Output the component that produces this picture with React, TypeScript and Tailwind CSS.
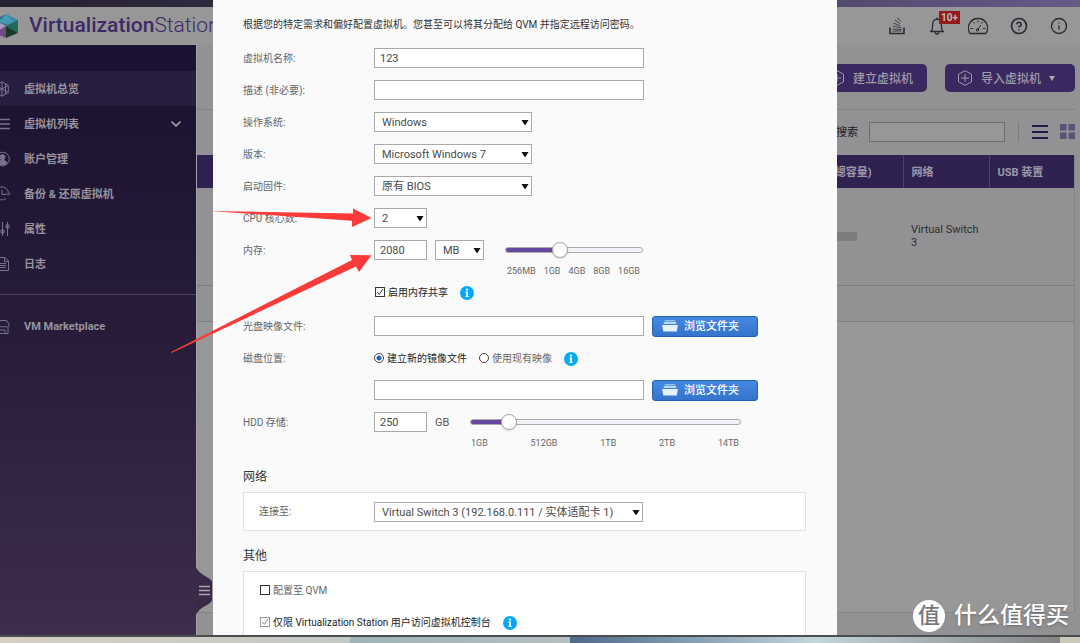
import type { ReactNode } from "react";
import { ChevronDown, CircleHelp, Info } from "lucide-react";

const field = "h-5 border border-[#a9a9a9] bg-white px-[5px] text-[11px] text-[#4a4a4a] outline-none";

function Caret() {
  return (
    <svg viewBox="0 0 8 5" className="pointer-events-none absolute top-2 right-[3px] h-[5px] w-2" aria-hidden="true">
      <path d="M.5 0h7L4.600 4.800H3.400z" fill="#111" />
    </svg>
  );
}

function Select({ id, label, value, className }: { id: string; label?: string; value: string; className: string }) {
  return (
    <span className={`relative flex ${className}`}>
      <select id={id} aria-label={label} className="h-5 w-full appearance-none border border-[#a9a9a9] bg-white pt-[2px] pl-[7px] text-[11px] text-[#4a4a4a] outline-none">
        <option>{value}</option>
      </select>
      <Caret />
    </span>
  );
}

function Row({ label, htmlFor, children }: { label: string; htmlFor?: string; children: ReactNode }) {
  return (
    <div className="flex h-5 items-center">
      <label htmlFor={htmlFor} className="w-[131px] shrink-0 text-[10px] text-[#666]">
        {label}
      </label>
      {children}
    </div>
  );
}

function InfoDot() {
  return (
    <svg viewBox="0 0 14 14" className="mt-[2px] h-[14px] w-[14px]" aria-hidden="true">
      <circle cx="7" cy="7" r="7" fill="#06a9fa" />
      <rect x="6.1" y="2.6" width="1.9" height="1.9" fill="#fff" />
      <path d="M5.4 5.6H8V10h.8v1.1H5.3V10h.8V6.7h-.7z" fill="#fff" />
    </svg>
  );
}

function Check({ id, disabled }: { id: string; disabled?: boolean }) {
  return (
    <span className="relative flex h-[10px] w-[10px]">
      <input
        id={id}
        type="checkbox"
        defaultChecked={id !== "qvm"}
        disabled={disabled}
        className="peer h-[10px] w-[10px] appearance-none border border-[#333] bg-white disabled:border-[#999]"
      />
      <svg viewBox="0 0 10 10" className="pointer-events-none absolute inset-0 hidden text-[#333] peer-checked:block peer-disabled:text-[#888]" aria-hidden="true">
        <path d="M2.2 5l2 2.4L8 2" fill="none" stroke="currentColor" />
      </svg>
    </span>
  );
}

const slider =
  "h-4 appearance-none bg-transparent outline-none [&::-webkit-slider-runnable-track]:h-[6px] [&::-webkit-slider-runnable-track]:rounded-full [&::-webkit-slider-runnable-track]:border [&::-webkit-slider-runnable-track]:border-[#aaa] [&::-webkit-slider-thumb]:mt-[-6px] [&::-webkit-slider-thumb]:h-4 [&::-webkit-slider-thumb]:w-4 [&::-webkit-slider-thumb]:appearance-none [&::-webkit-slider-thumb]:rounded-full [&::-webkit-slider-thumb]:border [&::-webkit-slider-thumb]:border-[#a5a5a5] [&::-webkit-slider-thumb]:bg-white [&::-webkit-slider-thumb]:shadow-sm";

function BrowseButton() {
  return (
    <button type="button" className="ml-2 flex h-[21px] w-[106px] items-center rounded-[3px] border border-[#2562b0] bg-linear-to-b from-[#4389e4] to-[#3474cc] pl-[9px] text-[11px] font-medium text-white">
      <svg viewBox="0 0 16 12" className="mr-[6px] h-3 w-4" aria-hidden="true">
        <path d="M3 0h10l.6 1.600H2.400z" fill="#8fc3f5" />
        <path d="M2 2h12l.5 2h-13z" fill="#b5dafa" />
        <path d="M.6 5h14.800c.4 0 .6.300.5.700l-1 5c-.1.600-.4.900-1 .900H2.100c-.6 0-.9-.3-1-.9l-1-5c-.1-.4.1-.7.500-.7z" fill="#e3f2ff" />
      </svg>
      <span className="pt-[2px]">浏览文件夹</span>
    </button>
  );
}

const stroke = { fill: "none", stroke: "currentColor", strokeWidth: 1 };

const menu = [
  {
    label: "虚拟机总览",
    icon: <path d="M8 .8l6.300 3.600v7.200L8 15.200l-6.300-3.600V4.400zM8 .8v14.400M1.700 4.400L8 8l6.300-3.600M1.700 11.600L8 8l6.300 3.600M4.500 3v10M11.500 3v10" />,
  },
  { label: "虚拟机列表", icon: <path d="M1 3.500h15M1 8h15M1 12.500h15" strokeWidth="1.300" />, expandable: true },
  {
    label: "账户管理",
    icon: (
      <>
        <circle cx="8.500" cy="8" r="6.800" />
        <path d="M8.500 3.600c3 0 2.900 3.600 1.500 5v1l2.600 1.200v1.400c-2 2-6 2-8.200 0v-1.400L7 9.600v-1c-1.400-1.400-1.500-5 1.500-5z" fill="currentColor" />
      </>
    ),
  },
  { label: "备份 & 还原虚拟机", icon: <path d="M12 12.500A6.500 6.500 0 1 1 14.500 7.500M8 4v4.500h4M12 7l2.500 2.200L16.500 7" /> },
  { label: "属性", icon: <path d="M3.500 1v14M8.500 1v14M13.500 1v14M2 5h3v3H2zM7 9h3v3H7zM12 4h3v3h-3z" /> },
  { label: "日志", icon: <path d="M2 1.500h9l3.500 3.500v9.500H2zM10.500 1.500V5.500h4M4.500 7.500h7.500M4.500 9.500h7.500M4.500 11.500h7.500" /> },
];

const market = <path d="M3 5l1-3.500h8.500L15 5v2c0 1.500-2.500 1.500-2.800 0-.4 1.500-2.600 1.500-3 0-.4 1.500-2.600 1.500-3 0-.4 1.500-3 1.500-3.200 0V5zM3 8.500v6h11v-6M3 11h8v3.500" />;

function MenuIcon({ children }: { children: ReactNode }) {
  return (
    <svg viewBox="0 0 16 16" {...stroke} className="mr-[14px] h-4 w-4 overflow-visible text-[#77748a]" aria-hidden="true">
      {children}
    </svg>
  );
}

function Sidebar() {
  return (
    <aside className="relative w-[197px] shrink-0 border-r border-[#a3a3a5] bg-linear-to-b from-[#1a1230] via-[#281c3a] to-[#3e2d4b] pt-[26px] text-[11px] font-bold text-[#97949e]">
      <nav className="overflow-hidden">
        <ul className="-ml-[6px]">
          {menu.map((item, i) => (
            <li key={item.label} className={i === 0 ? "bg-[#281e40]" : ""}>
              <a href="#" className="flex h-[35px] items-center">
                <MenuIcon>{item.icon}</MenuIcon>
                <span className="pt-[3px]">{item.label}</span>
                {item.expandable && <ChevronDown className="ml-auto mr-3 h-4 w-4 text-[#aaa]" strokeWidth={2.500} />}
              </a>
            </li>
          ))}
          <li className="mt-[13px] border-t border-[#4b415b] pt-[14px]">
            <a href="#" className="flex h-[35px] items-center">
              <MenuIcon>{market}</MenuIcon>
              <span className="pt-[2px]">VM Marketplace</span>
            </a>
          </li>
        </ul>
      </nav>
      <button type="button" aria-label="菜单" className="absolute -right-[17px] bottom-5 h-12 w-[17px]">
        <svg viewBox="0 0 17 48" className="h-12 w-[17px]">
          <path d="M0 0c3 8 16 11 16 15v18c0 4-13 7-16 15z" fill="#3a2a48" />
          <path d="M3 19.500h11M3 23.500h11M3 27.500h11" stroke="#aaa6ae" strokeWidth="1.500" />
        </svg>
      </button>
    </aside>
  );
}

function Header() {
  return (
    <header className="flex h-[38px] items-center bg-[#979797] pr-3">
      <svg viewBox="0 0 26 26" className="-ml-[7px] h-[26px] w-[26px]" aria-hidden="true">
        <path d="M13 1L1 7l12 6z" fill="#286d8d" />
        <path d="M13 1l12 6-12 6z" fill="#3989a3" />
        <path d="M13 1L5 9l8 2 8-2z" fill="#4798b2" />
        <path d="M25 7v13l-12-7z" fill="#1c6b5b" />
        <path d="M25 20l-12 5V13z" fill="#143e24" />
        <path d="M1 7l12 6v12L1 20z" fill="#714889" />
        <path d="M1 7l12 6-12 7z" fill="#a7a0b4" />
      </svg>
      <h1 className="ml-[10px] text-[21px] font-medium text-[#3d2a66]">
        Virtualization<span className="font-light">Station</span>
      </h1>
      <div className="ml-auto flex items-center gap-[22px] text-[#2b2a36]">
        <svg viewBox="0 0 18 18" {...stroke} className="h-[18px] w-[18px]" aria-hidden="true">
          <path d="M2 10.500v6h14v-6" strokeWidth="1.600" />
          <path d="M4.500 14h9M4.500 12l9 .6M4.800 9l8.500 2M5.500 6l7 3.200M7 2.800l5 4M9.500 .5l3 4" strokeWidth=".8" />
        </svg>
        <span className="relative">
          <svg viewBox="0 0 18 18" {...stroke} strokeWidth={1.300} className="h-[18px] w-[18px]" aria-hidden="true">
            <path d="M9 .5v1.500M2 14.500h14M3.500 14c1.500-2 1.100-4 1.100-6.500 0-7 8.800-7 8.800 0 0 2.500-.4 4.500 1.100 6.500M7 15.500c.5 2 3.500 2 4 0" />
          </svg>
          <span className="absolute -top-[6px] left-[11px] h-[13px] w-[21px] bg-[#94191d] text-center text-[10px] leading-[13px] font-bold text-[#bbb]">10+</span>
        </span>
        <svg viewBox="0 0 20 18" {...stroke} className="h-[18px] w-5" aria-hidden="true">
          <path d="M2 16.500C-2 10 2 1.500 10 1.500S22 10 18 16.500z" strokeWidth="1.300" />
          <path d="M10 3.500v2M5.500 5l1 1.500M14.500 5l-1 1.500M2.500 11.500h2.500M15 11.500h2.500M12.800 8L9.500 13" />
          <circle cx="9.500" cy="13" r="1.200" />
        </svg>
        <CircleHelp className="h-[18px] w-[18px]" strokeWidth={2.200} />
        <Info className="h-[18px] w-[18px]" strokeWidth={1.800} />
      </div>
    </header>
  );
}

function HexPlus() {
  return (
    <svg viewBox="0 0 16 16" {...stroke} className="mr-2 h-4 w-4" aria-hidden="true">
      <path d="M8 .7l6.500 3.600v7.400L8 15.300l-6.500-3.600V4.300zM8 4v8M4 8h8" />
    </svg>
  );
}

const actionButton = "flex h-[28px] items-center rounded-[5px] bg-[#3a2860] text-[12px] font-medium text-[#a09ba8]";

function Machines() {
  return (
    <main className="flex flex-1 flex-col bg-[#929295] pr-[5px]">
      <div className="flex justify-end gap-[18px] border-b border-[#838386] pt-[19px] pb-[17px]">
        <button type="button" className={`${actionButton} w-[110px] pl-3`}>
          <HexPlus />
          <span className="pt-px">建立虚拟机</span>
        </button>
        <button type="button" className={`${actionButton} w-[130px] pl-3`}>
          <HexPlus />
          <span className="pt-px">导入虚拟机</span>
          <svg viewBox="0 0 6 5" className="ml-2 h-[5px] w-[6px]" aria-hidden="true">
            <path d="M0 0h6L3 5z" fill="#aaa" />
          </svg>
        </button>
      </div>
      <div className="flex h-[43px] items-center justify-end">
        <label htmlFor="search" className="mr-[11px] pt-[3px] text-[11px] text-[#1d1d1d]">搜索</label>
        <input id="search" className="mr-[13px] h-5 w-[136px] border border-[#6c6c6c] bg-[#979797] px-1 text-[11px] outline-none" />
        <span className="mr-[13px] h-5 w-px bg-[#7b7b7e]" />
        <button type="button" aria-label="列表" className="mr-3">
          <svg viewBox="0 0 16 16" className="h-4 w-4">
            <path d="M0 2h16M0 8h16M0 14h16" stroke="#261550" strokeWidth="2.200" />
          </svg>
        </button>
        <button type="button" aria-label="网格">
          <svg viewBox="0 0 15 15" className="h-[15px] w-[15px]">
            <path d="M0 0h6.500v6.500H0zM8.500 0H15v6.500H8.500zM0 8.500h6.500V15H0zM8.500 8.500H15V15H8.500z" fill="#5c5276" />
          </svg>
        </button>
      </div>
      <div className="mt-[2px] mb-[22px] flex-1 border-r border-b border-[#858588] bg-[#979797]">
        <table className="w-full table-fixed text-left text-[11px]">
          <thead>
            <tr className="h-[33px] bg-[#2f2150] text-[#9c98a6]">
              <th aria-label="名称" />
              <th className="w-[80px] border-r border-[#4c4167] pt-[3px] pl-2">(總容量)</th>
              <th className="w-[86px] border-r border-[#4c4167] pt-[3px] pl-2">网络</th>
              <th className="w-[85px] pt-[3px] pl-2">USB 装置</th>
            </tr>
          </thead>
          <tbody className="bg-[#929295] text-[#2e2e2e]">
            <tr className="h-[97px] border-b border-[#7c7c7f]">
              <td />
              <td>
                <span className="block h-[9px] w-[34px] bg-[#7d7d7b]" />
              </td>
              <td className="pr-2 pl-2 leading-[13px]">Virtual Switch 3</td>
              <td />
            </tr>
            <tr className="h-[36px] border-b border-[#808083]">
              <td colSpan={4} />
            </tr>
          </tbody>
        </table>
      </div>
    </main>
  );
}

function CreateDialog() {
  return (
    <div role="dialog" aria-label="建立虚拟机" className="h-full flex-1 overflow-hidden bg-[#fafafa] pt-[18px] pr-[31px] pl-[30px]">
      <p className="h-[30px] text-[10px] leading-[13px] text-[#333]">根据您的特定需求和偏好配置虚拟机。您甚至可以将其分配给 QVM 并指定远程访问密码。</p>
      <div className="flex flex-col gap-3">
        <Row label="虚拟机名称:" htmlFor="name">
          <input id="name" defaultValue="123" className={`${field} w-[270px]`} />
        </Row>
        <Row label="描述 (非必要):" htmlFor="desc">
          <input id="desc" className={`${field} w-[270px]`} />
        </Row>
        <Row label="操作系统:" htmlFor="os">
          <Select id="os" value="Windows" className="w-[158px]" />
        </Row>
        <Row label="版本:" htmlFor="version">
          <Select id="version" value="Microsoft Windows 7" className="w-[158px]" />
        </Row>
        <Row label="启动固件:" htmlFor="firmware">
          <Select id="firmware" value="原有 BIOS" className="w-[158px]" />
        </Row>
        <Row label="CPU 核心数:" htmlFor="cpu">
          <Select id="cpu" value="2" className="w-[53px]" />
        </Row>
        <Row label="内存:" htmlFor="memory">
          <input id="memory" defaultValue="2080" className={`${field} w-[53px]`} />
          <Select id="unit" label="单位" value="MB" className="ml-2 w-[49px]" />
          <input
            type="range"
            aria-label="内存"
            defaultValue="38"
            className={`${slider} ml-[21px] w-[138px] [&::-webkit-slider-runnable-track]:bg-[linear-gradient(to_right,#6549a0_38%,#f2f2f8_38%)]`}
          />
        </Row>
      </div>
      <div className="mt-[6px] ml-[264px] flex h-3 w-[133px] items-center justify-between text-[9px] text-[#666]">
        <span>256MB</span>
        <span>1GB</span>
        <span>4GB</span>
        <span>8GB</span>
        <span>16GB</span>
      </div>
      <div className="mt-1 mb-[14px] ml-[132px] flex h-5 items-center text-[10px] text-[#222]">
        <Check id="share" />
        <label htmlFor="share" className="mr-3 ml-[3px]">启用内存共享</label>
        <InfoDot />
      </div>
      <div className="flex flex-col gap-3">
        <Row label="光盘映像文件:" htmlFor="iso">
          <input id="iso" className={`${field} w-[270px]`} />
          <BrowseButton />
        </Row>
        <Row label="磁盘位置:">
          <div className="flex items-center text-[10px] text-[#222]">
            <input id="new" type="radio" name="disk" defaultChecked className="h-[10px] w-[10px] appearance-none rounded-full border border-[#444] bg-white checked:bg-[radial-gradient(circle,#2060c8_2px,#fff_3px)]" />
            <label htmlFor="new" className="mr-3 ml-[3px]">建立新的镜像文件</label>
            <input id="existing" type="radio" name="disk" className="h-[10px] w-[10px] appearance-none rounded-full border border-[#444] bg-white checked:bg-[radial-gradient(circle,#2060c8_2px,#fff_3px)]" />
            <label htmlFor="existing" className="mr-3 ml-[3px] text-[#666]">使用现有映像</label>
            <InfoDot />
          </div>
        </Row>
        <Row label="" htmlFor="image">
          <input id="image" aria-label="磁盘位置" className={`${field} w-[270px]`} />
          <BrowseButton />
        </Row>
        <Row label="HDD 存储:" htmlFor="hdd">
          <input id="hdd" defaultValue="250" className={`${field} w-[53px]`} />
          <span className="ml-2 w-[35px] pt-[2px] text-[11px] text-[#555]">GB</span>
          <input
            type="range"
            aria-label="HDD 存储"
            defaultValue="12"
            className={`${slider} w-[271px] [&::-webkit-slider-runnable-track]:bg-[linear-gradient(to_right,#6549a0_14%,#f2f2f8_14%)]`}
          />
        </Row>
      </div>
      <div className="mt-[6px] ml-[228px] flex h-3 w-[268px] items-center justify-between text-[9px] text-[#666]">
        <span>1GB</span>
        <span>512GB</span>
        <span>1TB</span>
        <span>2TB</span>
        <span>14TB</span>
      </div>
      <h2 className="mt-[17px] h-5 text-[12px] leading-5 text-[#333]">网络</h2>
      <section className="mt-[5px] flex h-[39px] items-center border border-[#e2e2e2] bg-white pl-[15px]">
        <label htmlFor="switch" className="w-[115px] text-[10px] text-[#666]">连接至:</label>
        <Select id="switch" value="Virtual Switch 3 (192.168.0.111 / 实体适配卡 1)" className="w-[269px]" />
      </section>
      <h2 className="mt-[15px] h-5 text-[12px] leading-5 text-[#333]">其他</h2>
      <section className="mt-[5px] flex h-24 flex-col gap-3 border border-[#e2e2e2] bg-white pt-2 pl-4 text-[10px]">
        <div className="flex h-5 items-center text-[#666]">
          <Check id="qvm" />
          <label htmlFor="qvm" className="ml-[3px]">配置至 QVM</label>
        </div>
        <div className="flex h-5 items-center text-[#222]">
          <Check id="console" disabled />
          <label htmlFor="console" className="mr-3 ml-[3px]">仅限 Virtualization Station 用户访问虚拟机控制台</label>
          <InfoDot />
        </div>
      </section>
    </div>
  );
}

export default function App() {
  return (
    <div className="flex h-screen flex-col overflow-hidden font-[Roboto,'Noto_Sans_CJK_SC',sans-serif]">
      <div className="relative flex flex-1 flex-col overflow-hidden">
        <div className="h-[7px] shrink-0 bg-linear-to-r from-[#25202f] via-[#3e3755] to-[#665a87]" />
        <Header />
        <div className="flex flex-1">
          <Sidebar />
          <Machines />
        </div>

        <div className="absolute inset-0 flex pr-[243px] pl-[213px]">
          <CreateDialog />
        </div>

        {/* Callout arrows */}
        <svg width="380" height="360" className="pointer-events-none absolute top-0 left-0" fill="#fb3a3a" aria-hidden="true">
          <path d="M210 211l143 2.500v-5l18.500 9.500L352 227v-6.200z" />
          <path d="M171 352l181-92-2-5 21.500.3L359 272l-3-5.500-184.500 86.500z" />
        </svg>

        <div className="absolute right-[11px] bottom-[3px] flex items-center gap-[9px] text-white">
          <span className="flex h-8 w-8 items-center justify-center rounded-full bg-white text-[22px] leading-8 font-medium text-[#777]">值</span>
          <span className="text-[23px] leading-8 font-medium text-shadow-md">什么值得买</span>
        </div>
      </div>
      <div className="flex h-2 shrink-0 border-t-2 border-[#4b4e50]">
        <div className="w-[350px] bg-linear-to-r from-[#d6cfc2] to-[#c3c9c4]" />
        <div className="w-[220px] bg-linear-to-r from-[#9fb3b8] to-[#b3c0c0]" />
        <div className="flex-1 bg-linear-to-r from-[#4f6a8a] via-[#c2d6dc] to-[#858585]" />
        <div className="w-5 bg-[#cbc8b9]" />
      </div>
    </div>
  );
}
